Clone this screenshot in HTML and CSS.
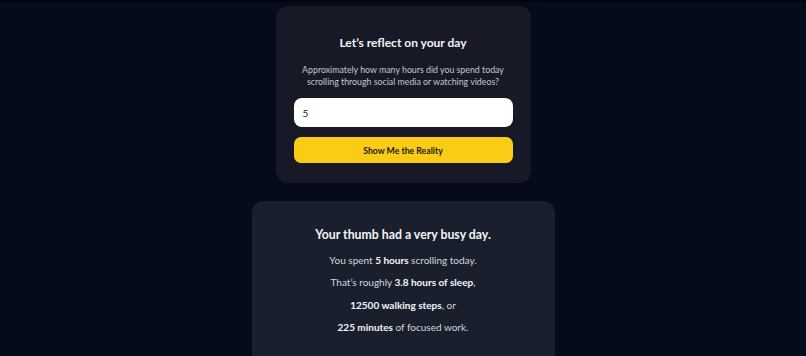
FILE: index.html
```html
<!DOCTYPE html>
<html lang="en">
<head>
<meta charset="utf-8">
<title>Reflect</title>
<link rel="stylesheet" href="styles.css">
</head>
<body>
<main class="page">
  <section class="card ask">
    <h1 class="title">Let’s reflect on your day</h1>
    <p class="sub">Approximately how many hours did you spend today scrolling through social media or watching videos?</p>
    <input class="hours" type="text" value="5">
    <button class="reveal">Show Me the Reality</button>
  </section>
  <section class="card result">
    <h2 class="title big">Your thumb had a very busy day.</h2>
    <p class="line">You spent <b>5 hours</b> scrolling today.</p>
    <p class="line">That’s roughly <b>3.8 hours of sleep</b>,</p>
    <p class="line"><b>12500 walking steps</b>, or</p>
    <p class="line"><b>225 minutes</b> of focused work.</p>
  </section>
</main>
</body>
</html>
```
FILE: styles.css
```css
html, body {
  margin: 0;
  padding: 0;
  background: #060b1b;
  height: 100%;
  overflow: hidden;
}
body {
  border-top: 2px solid #02040a;
  font-family: Lato, "Open Sans", sans-serif;
  color: #e5e7eb;
}
.page {
  display: flex;
  flex-direction: column;
  align-items: center;
  gap: 18px;
  padding-top: 4px;
}
.card {
  box-sizing: border-box;
  border-radius: 12px;
  text-align: center;
}
.ask {
  width: 255px;
  background: #171a26;
  padding: 28px 18px 20px;
  display: flex;
  flex-direction: column;
}
.result {
  width: 303px;
  background: #1a1f2e;
  padding: 25px 20px 20px;
  height: 200px;
}
.title {
  margin: 0;
  font-size: 12px;
  line-height: 18px;
  font-weight: 700;
  color: #f3f4f6;
}
.title.big {
  font-size: 12.3px;
}
.sub {
  margin: 12px -4px 0;
  font-size: 8.8px;
  line-height: 11.5px;
  color: #c4c8d0;
}
.hours {
  margin-top: 11px;
  box-sizing: border-box;
  height: 29px;
  width: 100%;
  border: none;
  border-radius: 8px;
  background: #ffffff;
  padding: 0 9px;
  font-family: Lato, "Open Sans", sans-serif;
  font-size: 10px;
  color: #222;
  outline: none;
}
.reveal {
  margin-top: 10px;
  height: 26px;
  width: 100%;
  border: none;
  border-radius: 7px;
  background: #facc15;
  font-family: Lato, "Open Sans", sans-serif;
  font-size: 8.7px;
  font-weight: 700;
  color: #1a1a1a;
  cursor: pointer;
}
.line {
  margin: 0;
  font-size: 10px;
  line-height: 22.3px;
  color: #d4d7de;
}
.line:first-of-type {
  margin-top: 5px;
}
.line b {
  color: #f5f6f8;
  font-weight: 700;
}
```
